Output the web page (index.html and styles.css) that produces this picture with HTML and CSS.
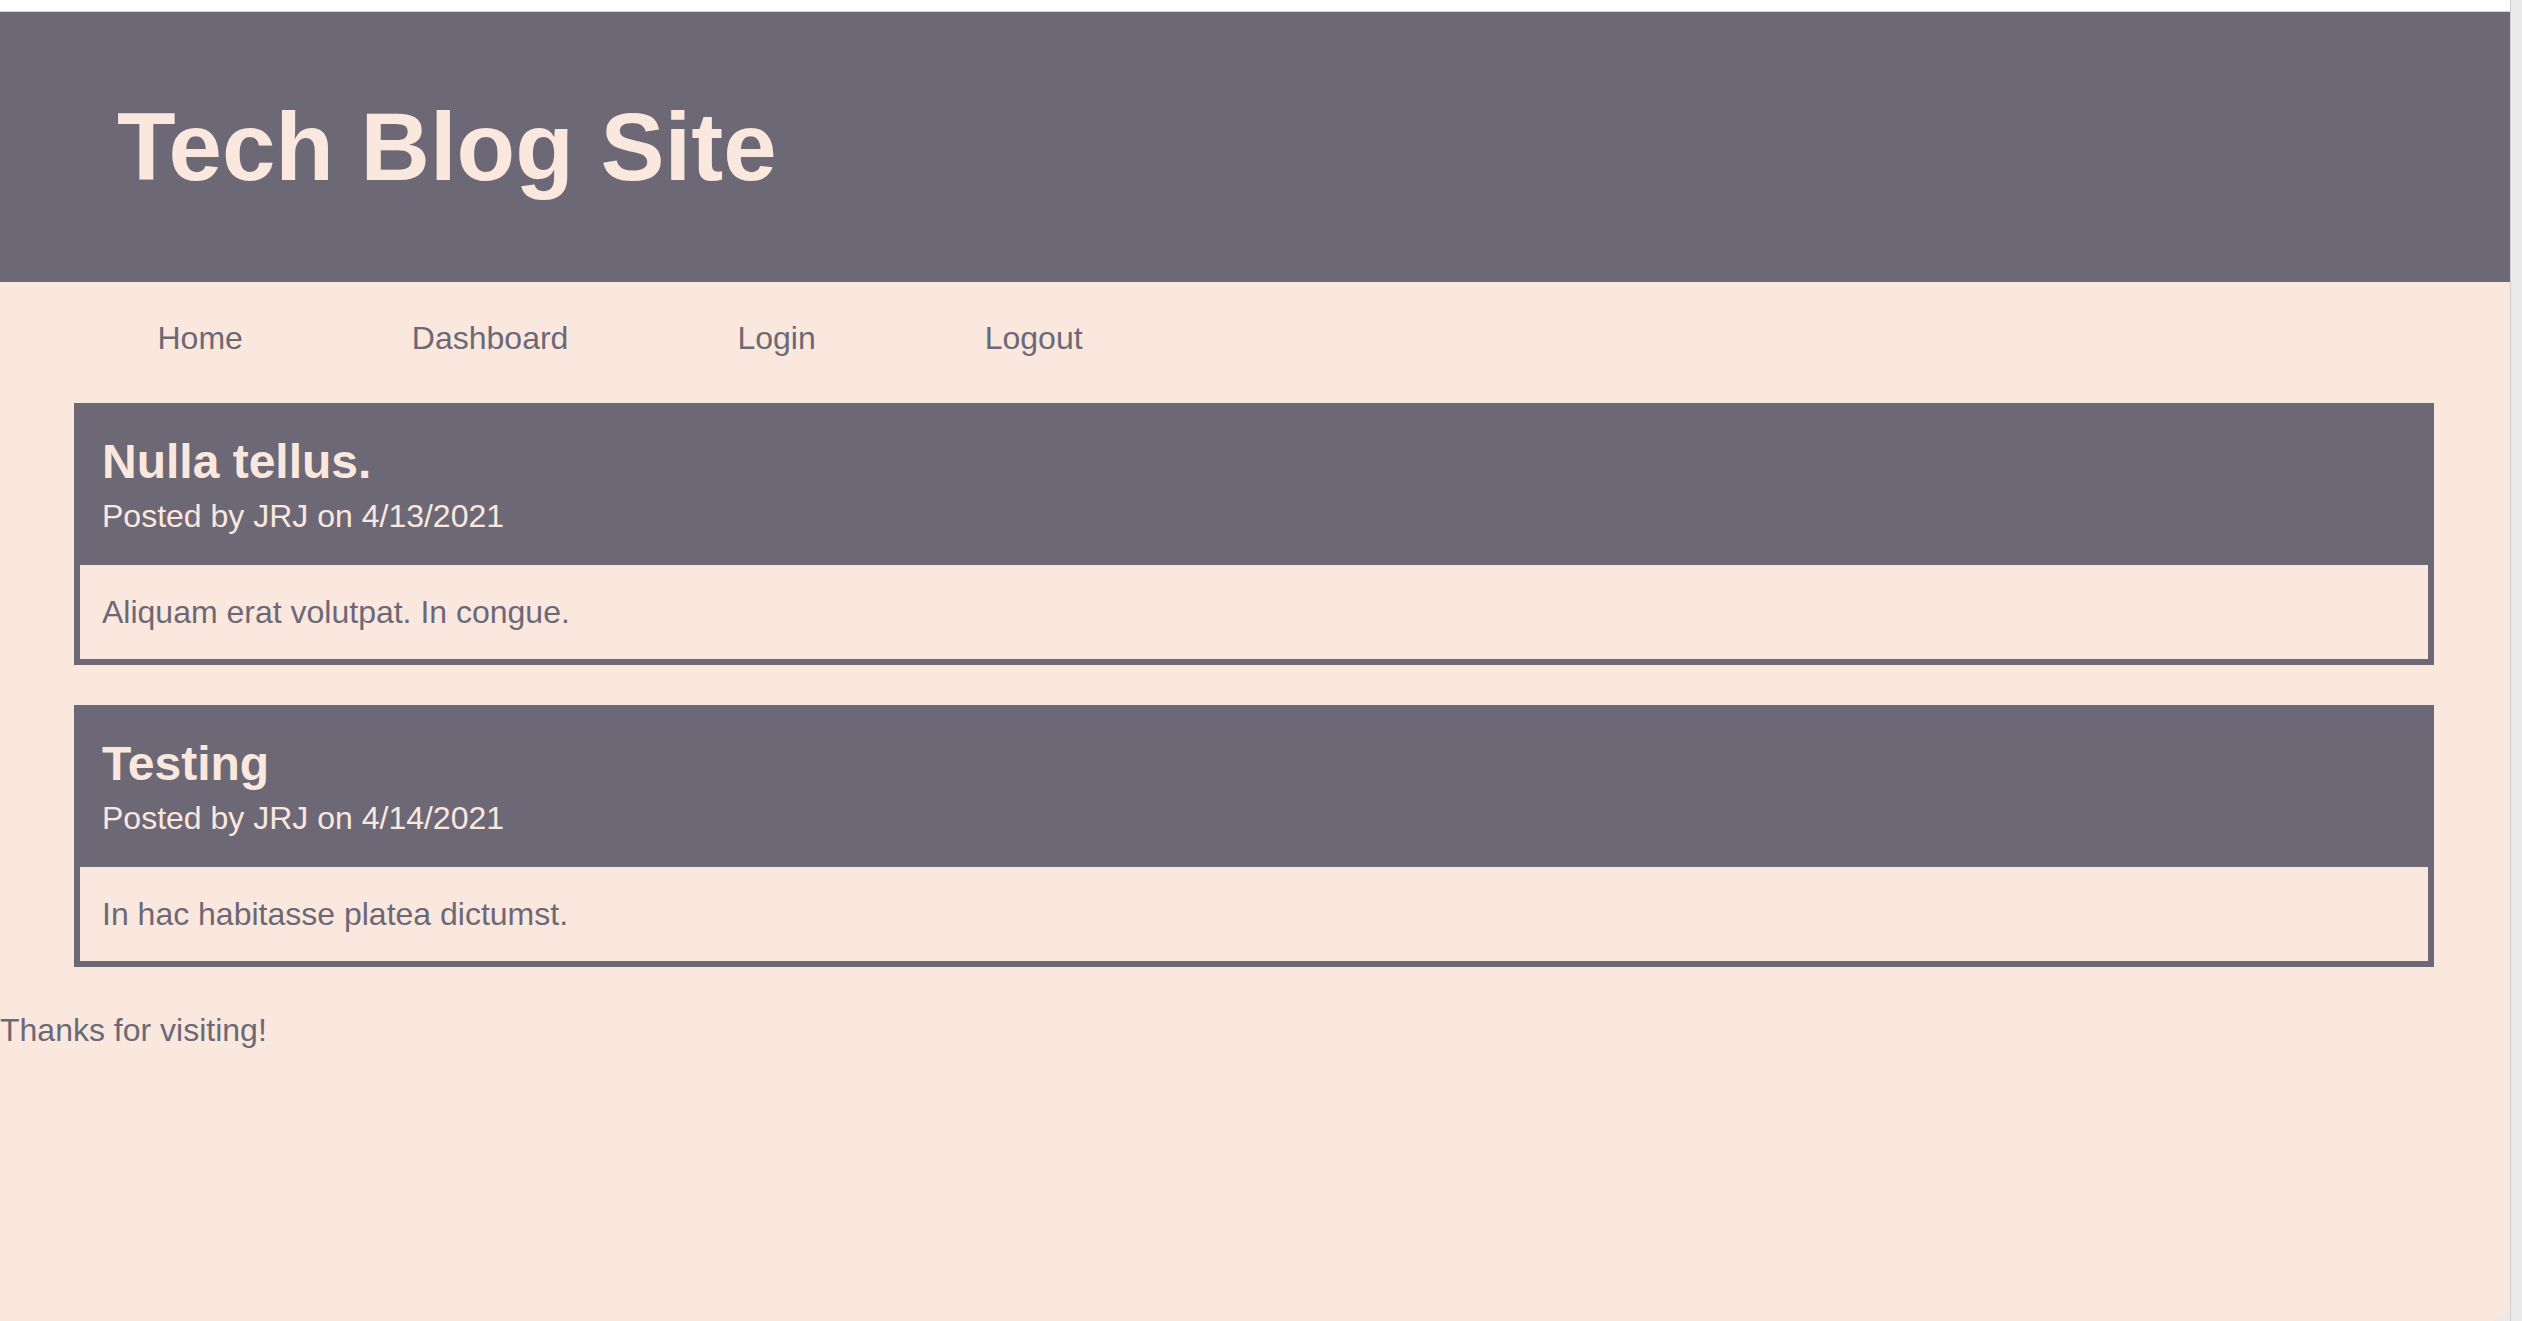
FILE: index.html
```html
<!DOCTYPE html>
<html lang="en">
<head>
<meta charset="utf-8">
<title>Tech Blog Site</title>
<link rel="stylesheet" href="styles.css">
</head>
<body>
<div class="frame">
  <div class="page">
    <div class="topbar"></div>
    <header class="site-header">
      <h1 class="site-title">Tech Blog Site</h1>
    </header>
    <nav class="site-nav">
      <a class="nav-link" href="#">Home</a>
      <a class="nav-link" href="#">Dashboard</a>
      <a class="nav-link" href="#">Login</a>
      <a class="nav-link" href="#">Logout</a>
    </nav>
    <main class="posts">
      <article class="post">
        <div class="post-head">
          <h2 class="post-title">Nulla tellus.</h2>
          <p class="post-meta">Posted by JRJ on 4/13/2021</p>
        </div>
        <div class="post-body">
          <p class="post-text">Aliquam erat volutpat. In congue.</p>
        </div>
      </article>
      <article class="post">
        <div class="post-head">
          <h2 class="post-title">Testing</h2>
          <p class="post-meta">Posted by JRJ on 4/14/2021</p>
        </div>
        <div class="post-body">
          <p class="post-text">In hac habitasse platea dictumst.</p>
        </div>
      </article>
    </main>
    <footer class="site-footer">Thanks for visiting!</footer>
  </div>
  <div class="side-strip"></div>
</div>
</body>
</html>
```

FILE: styles.css
```css
html, body {
  margin: 0;
  padding: 0;
  height: 100%;
}

body {
  font-family: "Liberation Sans", Arial, Helvetica, sans-serif;
  background: #e9e9e9;
  overflow: hidden;
}

.frame {
  display: flex;
  height: 1321px;
}

.page {
  flex: 1;
  background: #fae8df;
  color: #6d6875;
  border-bottom-right-radius: 20px;
  overflow: hidden;
}

.side-strip {
  width: 11px;
  background: #e9e9e9;
  border-left: 1px solid #cfcfcf;
}

.topbar {
  height: 11px;
  background: #ffffff;
  border-bottom: 1px solid #d2d2d4;
}

.site-header {
  height: 270px;
  background: #6d6875;
  display: flex;
  align-items: center;
  padding-left: 117px;
}

.site-title {
  margin: 0;
  font-size: 96px;
  line-height: 110px;
  font-weight: 700;
  color: #fae8df;
}

.site-nav {
  display: flex;
  padding: 36px 0 45px 73px;
}

.nav-link {
  padding: 0 84.5px;
  font-size: 32px;
  line-height: 40px;
  color: #6d6875;
  text-decoration: none;
}

.posts {
  display: flex;
  flex-direction: column;
  gap: 40px;
  margin: 0 76px 0 74px;
}

.post {
  border: 6px solid #6d6875;
  background: #fae8df;
}

.post-head {
  background: #6d6875;
  color: #fae8df;
  padding: 25px 22px 29px;
}

.post-title {
  margin: 0 0 6px;
  font-size: 48px;
  line-height: 56px;
  font-weight: 700;
}

.post-meta {
  margin: 0;
  font-size: 32px;
  line-height: 40px;
}

.post-body {
  padding: 27px 22px;
}

.post-text {
  margin: 0;
  font-size: 32px;
  line-height: 40px;
  color: #6d6875;
}

.site-footer {
  margin-top: 43px;
  font-size: 32px;
  line-height: 40px;
  color: #6d6875;
}
```
